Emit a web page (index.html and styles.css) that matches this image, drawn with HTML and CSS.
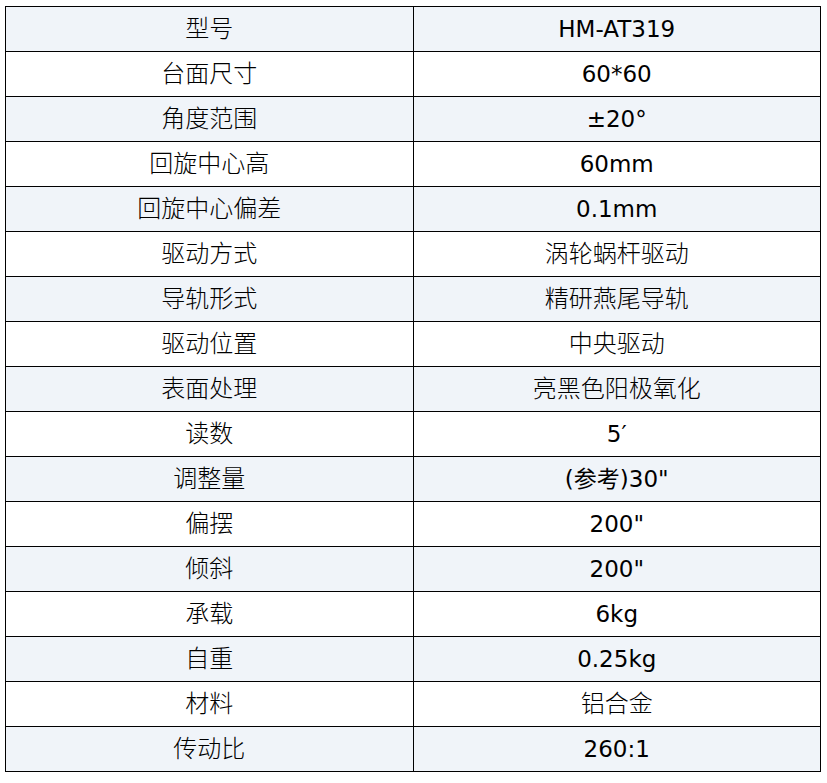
FILE: index.html
```html
<!DOCTYPE html>
<html lang="zh">
<head>
<meta charset="utf-8">
<title>参数</title>
<link rel="stylesheet" href="styles.css">
</head>
<body>
<table class="spec">
<tbody>
<tr><td>型号</td><td>HM-AT319</td></tr>
<tr><td>台面尺寸</td><td>60*60</td></tr>
<tr><td>角度范围</td><td>±20°</td></tr>
<tr><td>回旋中心高</td><td>60mm</td></tr>
<tr><td>回旋中心偏差</td><td>0.1mm</td></tr>
<tr><td>驱动方式</td><td class="zh">涡轮蜗杆驱动</td></tr>
<tr><td>导轨形式</td><td class="zh">精研燕尾导轨</td></tr>
<tr><td>驱动位置</td><td class="zh">中央驱动</td></tr>
<tr><td>表面处理</td><td class="zh">亮黑色阳极氧化</td></tr>
<tr><td>读数</td><td>5′</td></tr>
<tr><td>调整量</td><td>(参考)30"</td></tr>
<tr><td>偏摆</td><td>200"</td></tr>
<tr><td>倾斜</td><td>200"</td></tr>
<tr><td>承载</td><td>6kg</td></tr>
<tr><td>自重</td><td>0.25kg</td></tr>
<tr><td>材料</td><td class="zh">铝合金</td></tr>
<tr><td>传动比</td><td>260:1</td></tr>
</tbody>
</table>
</body>
</html>
```
FILE: styles.css
```css
html, body {
  margin: 0;
  padding: 0;
  background: #ffffff;
}
body {
  padding: 6px 0 0 5px;
}
.spec {
  border-collapse: collapse;
  width: 816px;
  table-layout: fixed;
  font-family: "DejaVu Sans", "Noto Sans CJK SC", sans-serif;
  font-size: 23px;
  color: #000;
}
.spec td {
  border: 1px solid #000;
  height: 44px;
  padding: 0;
  text-align: center;
  vertical-align: middle;
  line-height: 26px;
}
.spec td:first-child,
.spec td.zh {
  font-size: 24px;
  font-weight: 300;
}
.spec tr:nth-child(odd) td {
  background: #f0f4f9;
}
```
